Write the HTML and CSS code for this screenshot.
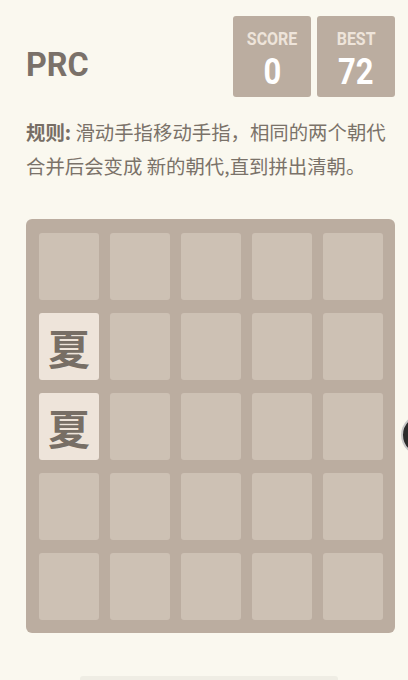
FILE: index.html
```html
<!DOCTYPE html>
<html lang="zh">
<head>
  <meta charset="UTF-8">
  <title>PRC</title>
  <link rel="stylesheet" href="styles.css">
</head>
<body>
  <div class="container">
    <div class="heading">
      <h1 class="title">PRC</h1>
      <div class="scores">
        <div class="score-box">
          <span class="score-label">SCORE</span>
          <span class="score-value">0</span>
        </div>
        <div class="score-box">
          <span class="score-label">BEST</span>
          <span class="score-value">72</span>
        </div>
      </div>
    </div>

    <p class="rules"><strong>规则:</strong> 滑动手指移动手指，相同的两个朝代合并后会变成 新的朝代,直到拼出清朝。</p>

    <div class="board">
      <div class="cell"></div><div class="cell"></div><div class="cell"></div><div class="cell"></div><div class="cell"></div>
      <div class="cell tile">夏</div><div class="cell"></div><div class="cell"></div><div class="cell"></div><div class="cell"></div>
      <div class="cell tile">夏</div><div class="cell"></div><div class="cell"></div><div class="cell"></div><div class="cell"></div>
      <div class="cell"></div><div class="cell"></div><div class="cell"></div><div class="cell"></div><div class="cell"></div>
      <div class="cell"></div><div class="cell"></div><div class="cell"></div><div class="cell"></div><div class="cell"></div>
    </div>

    <div class="footer-bar"></div>
  </div>

  <div class="float-btn"></div>
</body>
</html>
```

FILE: styles.css
```css
* { box-sizing: border-box; margin: 0; padding: 0; }
html, body {
  background: #faf8ef;
  overflow: hidden;
}
body {
  font-family: Roboto, "Noto Sans CJK SC", sans-serif;
  color: #776e65;
}
.container {
  width: 369px;
  margin-left: 26px;
  padding-top: 16px;
}
.heading {
  display: flex;
  justify-content: space-between;
  align-items: flex-start;
}
.title {
  margin-top: 31px;
  font-size: 34px;
  line-height: 34px;
  font-weight: bold;
  color: #7a7169;
  transform: scaleX(0.95);
  transform-origin: left center;
}
.scores {
  display: flex;
  gap: 6px;
}
.score-box {
  display: flex;
  flex-direction: column;
  align-items: center;
  width: 78px;
  height: 81px;
  padding-top: 13px;
  border-radius: 3px;
  background: #bbada0;
}
.score-label {
  font-size: 19px;
  line-height: 20px;
  font-weight: bold;
  color: #eee4da;
  transform: scaleX(0.84);
}
.score-value {
  margin-top: 4px;
  font-size: 36px;
  line-height: 38px;
  font-weight: bold;
  color: #fff;
  transform: scaleX(0.86);
}
.rules {
  margin-top: 18px;
  font-family: "Noto Sans CJK SC", sans-serif;
  font-size: 19.4px;
  line-height: 34px;
  color: #7a7269;
}
.rules strong {
  color: #776e65;
}
.board {
  margin-top: 36px;
  display: grid;
  grid-template-columns: repeat(5, 60px);
  grid-auto-rows: 67px;
  column-gap: 11px;
  row-gap: 13px;
  padding: 14px 11px 13px 13px;
  border-radius: 6px;
  background: #bbada0;
}
.cell {
  border-radius: 3px;
  background: #cdc1b4;
}
.tile {
  display: flex;
  align-items: center;
  justify-content: center;
  background: #eee4da;
  font-family: "Noto Sans CJK SC", sans-serif;
  font-size: 42px;
  font-weight: bold;
  color: #776e65;
}
.footer-bar {
  width: 258px;
  height: 20px;
  margin: 43px 0 0 54px;
  border-radius: 3px;
  background: #efede4;
}
.float-btn {
  position: fixed;
  left: 401px;
  top: 414px;
  width: 42px;
  height: 42px;
  border-radius: 50%;
  background: #2c2c2c;
  border: 2px solid #c8c8c8;
}
```
